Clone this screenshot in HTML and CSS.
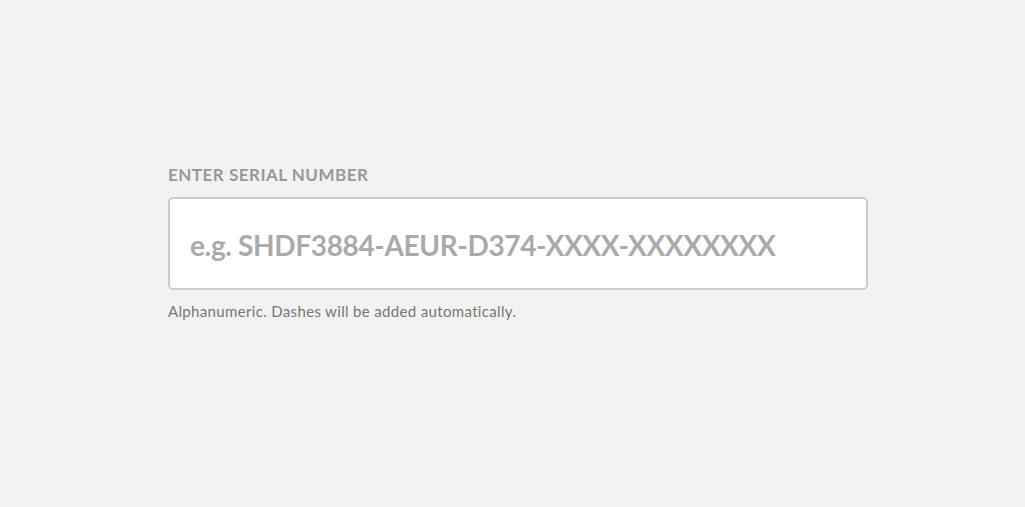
FILE: index.html
```html
<!DOCTYPE html>
<html>
<head>
<meta charset="utf-8">
<link rel="stylesheet" href="styles.css">
</head>
<body>
<div class="page">
  <div class="field">
    <label class="label" for="serial">ENTER SERIAL NUMBER</label>
    <input class="input" id="serial" type="text" placeholder="e.g. SHDF3884-AEUR-D374-XXXX-XXXXXXXX">
    <p class="help">Alphanumeric. Dashes will be added automatically.</p>
  </div>
</div>
</body>
</html>
```

FILE: styles.css
```css
html, body {
  margin: 0;
  padding: 0;
  background: #f2f2f2;
  height: 100%;
}
.page {
  padding: 163px 0 0 168px;
  font-family: Lato, "Liberation Sans", sans-serif;
}
.field {
  width: 700px;
  display: flex;
  flex-direction: column;
}
.label {
  font-size: 17px;
  font-weight: 700;
  color: #999;
  letter-spacing: 0.5px;
  line-height: 24px;
  margin-bottom: 10px;
}
.input {
  box-sizing: border-box;
  width: 700px;
  height: 93px;
  border: 2px solid #ccc;
  border-radius: 5px;
  background: #fff;
  padding: 2px 20px 0;
  font-family: Lato, "Liberation Sans", sans-serif;
  font-size: 28px;
  font-weight: 700;
  letter-spacing: -0.35px;
  color: #999;
  outline: none;
}
.input::placeholder {
  color: #aaa;
}
.help {
  margin: 11px 0 0;
  font-size: 15px;
  letter-spacing: 0.34px;
  line-height: 20px;
  color: #777;
}
```
